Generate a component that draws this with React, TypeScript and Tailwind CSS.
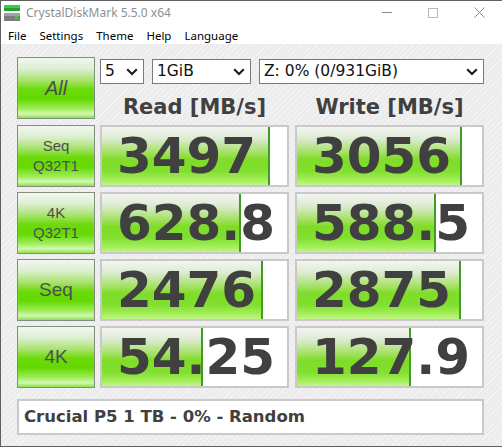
import React from 'react';

type Result = {
  label: string[];
  read: string;
  readBar: number;
  write: string;
  writeBar: number;
};

const results: Result[] = [
  { label: ['Seq', 'Q32T1'], read: '3497', readBar: 168, write: '3056', writeBar: 165 },
  { label: ['4K', 'Q32T1'], read: '628.8', readBar: 139, write: '588.5', writeBar: 139 },
  { label: ['Seq'], read: '2476', readBar: 161, write: '2875', writeBar: 164 },
  { label: ['4K'], read: '54.25', readBar: 101, write: '127.9', writeBar: 114 },
];

function Chevron() {
  return (
    <svg width="12" height="8" viewBox="0 0 12 8" className="shrink-0">
      <path d="M1.2 1.2 L6 6 L10.8 1.2" fill="none" stroke="#1b1b1b" strokeWidth="2" />
    </svg>
  );
}

function Select({ value, width }: { value: string; width: string }) {
  return (
    <div
      className={`flex h-[25px] items-center justify-between border border-[#7a7a7a] bg-white pl-[4px] pr-[5px] font-['DejaVu_Sans',sans-serif] text-[15.5px] text-[#111] ${width}`}
    >
      <span className="leading-none">{value}</span>
      <Chevron />
    </div>
  );
}

function GreenButton({ children }: { children: React.ReactNode }) {
  return (
    <div className="flex h-[62px] w-[78px] shrink-0 flex-col items-center justify-center border border-[#7f907f] bg-[linear-gradient(to_bottom,#f3f6f1_0%,#dcefd0_18%,#a6e26a_38%,#6bdb0a_52%,#64d900_68%,#9cec58_84%,#d4f8b4_93%,#8ee04a_100%)] font-['Liberation_Sans',sans-serif] text-[#4e4e4e]">
      {children}
    </div>
  );
}

function ValueBox({ value, bar }: { value: string; bar: number }) {
  return (
    <div
      className="flex h-[62px] w-[189px] items-center border-2 border-[#c9c9c9] bg-white bg-[linear-gradient(to_left,#3f9c24_2px,transparent_2px),linear-gradient(to_bottom,#f4f5f2_0%,#dcebd2_20%,#a9e26c_42%,#7fdd28_56%,#80e02e_76%,#a6ef5c_92%,#c2f58a_100%)] bg-no-repeat pl-[15px] font-['DejaVu_Sans',sans-serif] text-[50px] font-bold leading-none text-[#404040]"
      style={{ backgroundSize: `${bar}px 100%, ${bar}px 100%` }}
    >
      {value}
    </div>
  );
}

function AppIcon() {
  return (
    <svg width="16" height="16" viewBox="0 0 16 16">
      <rect x="0" y="0" width="16" height="3" fill="#45c84a" />
      <rect x="0" y="3" width="16" height="3" fill="#23a02c" />
      <rect x="0" y="8" width="16" height="8" fill="#7c7c7c" />
      <rect x="0" y="8" width="16" height="3" fill="#a0a0a0" />
      <rect x="11" y="11" width="3" height="3" fill="#39d13f" />
    </svg>
  );
}

export default function App() {
  return (
    <div className="h-[447px] w-[502px] overflow-hidden border-t border-b border-l border-[#5f5f5f] bg-white font-['Noto_Sans',sans-serif]">
      {/* Title bar */}
      <div className="flex h-[23px] items-center">
        <div className="ml-[3px] mt-[1px]">
          <AppIcon />
        </div>
        <span className="ml-[6px] text-[12px] text-[#8f8f8f]">CrystalDiskMark 5.5.0 x64</span>
        <div className="ml-auto flex h-full">
          <div className="flex w-[46px] items-center justify-center">
            <div className="h-px w-[10px] bg-[#8a8a8a]" />
          </div>
          <div className="flex w-[46px] items-center justify-center">
            <div className="h-[10px] w-[10px] border border-[#b8b8b8]" />
          </div>
          <div className="flex w-[46px] items-center justify-center">
            <svg width="11" height="11" viewBox="0 0 11 11">
              <path d="M0.5 0.5 L10.5 10.5 M10.5 0.5 L0.5 10.5" stroke="#8a8a8a" strokeWidth="1" />
            </svg>
          </div>
        </div>
      </div>

      {/* Menu */}
      <div className="flex h-[20px] items-center gap-[13px] pl-[7px] pt-[3px] text-[11.5px] text-black">
        <span>File</span>
        <span>Settings</span>
        <span>Theme</span>
        <span>Help</span>
        <span>Language</span>
      </div>

      {/* Main area */}
      <div className="h-[402px] bg-[#efefef] bg-[repeating-linear-gradient(135deg,#f4f4f4_0px,#f4f4f4_1px,#ececec_1px,#ececec_4px)] pl-[16px] pt-[13px]">
        <div className="flex h-[62px]">
          <GreenButton>
            <span className="text-[20px] italic">All</span>
          </GreenButton>
          <div className="ml-[5px] flex w-[384px] flex-col">
            <div className="mt-[2px] flex gap-[8px]">
              <Select value="5" width="w-[44px]" />
              <Select value="1GiB" width="w-[99px]" />
              <Select value="Z: 0% (0/931GiB)" width="w-[225px]" />
            </div>
            <div className="mt-[13px] flex gap-[6px] font-['DejaVu_Sans',sans-serif] text-[21px] font-bold leading-none text-[#404040]">
              <div className="w-[189px] text-center">Read [MB/s]</div>
              <div className="w-[189px] text-center">Write [MB/s]</div>
            </div>
          </div>
        </div>

        <div className="mt-[6px] flex flex-col gap-[5px]">
          {results.map((r) => (
            <div key={r.label.join(' ') + r.read} className="flex">
              <GreenButton>
                {r.label.length > 1 ? (
                  r.label.map((l) => (
                    <span key={l} className="text-[15px] leading-[20px]">
                      {l}
                    </span>
                  ))
                ) : (
                  <span className="text-[19px]">{r.label[0]}</span>
                )}
              </GreenButton>
              <div className="ml-[5px]">
                <ValueBox value={r.read} bar={r.readBar} />
              </div>
              <div className="ml-[6px]">
                <ValueBox value={r.write} bar={r.writeBar} />
              </div>
            </div>
          ))}
        </div>

        {/* Comment */}
        <div className="mt-[11px] flex h-[36px] w-[467px] items-center border-2 border-[#c9c9c9] bg-white pl-[5px] font-['DejaVu_Sans',sans-serif] text-[16.5px] font-bold text-[#404040]">
          Crucial P5 1 TB - 0% - Random
        </div>
      </div>
    </div>
  );
}
